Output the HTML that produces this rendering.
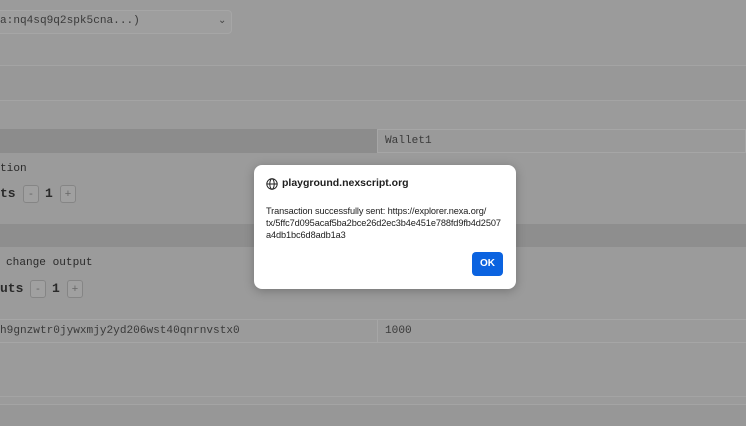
<!DOCTYPE html>
<html><head><style>
*{margin:0;padding:0;box-sizing:border-box}
body{width:746px;height:426px;overflow:hidden;background:#9b9b9b;position:relative;font-family:"Liberation Mono",monospace;color:#2a2a2a}
.a{position:absolute}
.mono{font-family:"Liberation Mono",monospace;font-size:11.1px}
.btn{position:absolute;width:16px;height:18px;border:1px solid #858585;border-radius:3px;background:#a0a0a0;font-size:11px;text-align:center;line-height:16px;color:#666;font-family:"Liberation Sans",sans-serif}
.dlg{position:absolute;left:254px;top:165px;width:262px;height:124px;background:#fff;border-radius:8px;box-shadow:0 2px 10px rgba(0,0,0,.25);font-family:"Liberation Sans",sans-serif;color:#202020}
</style></head><body>
<div class="a" style="left:-5px;top:10px;width:237px;height:24px;border:1px solid #a6a6a6;border-radius:4px;background:#9e9e9e"></div>
<div class="a mono" style="left:0;top:15px;color:#3a3a3a">a:nq4sq9q2spk5cna...)</div>
<div class="a" style="left:218px;top:15px;font-size:10px;color:#444;font-family:'Liberation Sans'">&#8964;</div>
<div class="a" style="left:0;top:65px;width:746px;height:36px;border-top:1px solid #a4a4a4;border-bottom:1px solid #a4a4a4;background:#989898"></div>
<div class="a" style="left:0;top:129px;width:377px;height:24px;background:#8c8c8c"></div>
<div class="a" style="left:377px;top:129px;width:369px;height:24px;border:1px solid #a6a6a6;background:#9a9a9a"></div>
<div class="a mono" style="left:385px;top:135px;color:#3a3a3a">Wallet1</div>
<div class="a mono" style="left:0;top:163px">tion</div>
<div class="a mono" style="left:0;top:186px;font-size:13px;font-weight:bold">ts</div>
<div class="btn" style="left:23px;top:185px">-</div>
<div class="a mono" style="left:45px;top:186px;font-size:13px;font-weight:bold">1</div>
<div class="btn" style="left:60px;top:185px">+</div>
<div class="a" style="left:0;top:224px;width:746px;height:23px;background:#8e8e8e"></div>
<div class="a mono" style="left:6px;top:257px">change output</div>
<div class="a mono" style="left:0;top:281px;font-size:13px;font-weight:bold">uts</div>
<div class="btn" style="left:30px;top:280px">-</div>
<div class="a mono" style="left:52px;top:281px;font-size:13px;font-weight:bold">1</div>
<div class="btn" style="left:67px;top:280px">+</div>
<div class="a" style="left:0;top:319px;width:746px;height:24px;border-top:1px solid #a6a6a6;border-bottom:1px solid #a6a6a6"></div>
<div class="a" style="left:377px;top:319px;width:1px;height:24px;background:#a6a6a6"></div>
<div class="a mono" style="left:0;top:325px;color:#3a3a3a">h9gnzwtr0jywxmjy2yd206wst40qnrnvstx0</div>
<div class="a mono" style="left:385px;top:325px;color:#3a3a3a">1000</div>
<div class="a" style="left:0;top:396px;width:746px;height:9px;border-top:1px solid #a4a4a4;border-bottom:1px solid #a4a4a4"></div>
<div class="a" style="left:0;top:405px;width:746px;height:21px;background:#979797"></div>
<div class="dlg">
<svg class="a" style="left:12px;top:13px" width="12" height="12" viewBox="0 0 12 12" fill="none" stroke="#222" stroke-width="1"><circle cx="6" cy="6" r="5.2"/><ellipse cx="6" cy="6" rx="2.2" ry="5.2"/><line x1="0.8" y1="6" x2="11.2" y2="6"/></svg>
<div class="a" style="left:28px;top:12px;font-size:10.5px;font-weight:bold">playground.nexscript.org</div>
<div class="a" style="left:12px;top:40px;font-size:9.2px;line-height:12px;width:245px;letter-spacing:-0.1px">Transaction successfully sent: https://explorer.nexa.org/<br>tx/5ffc7d095acaf5ba2bce26d2ec3b4e451e788fd9fb4d2507<br>a4db1bc6d8adb1a3</div>
<div class="a" style="left:218px;top:87px;width:31px;height:24px;background:#0b63e0;border-radius:4px;color:#fff;font-size:10px;font-weight:bold;text-align:center;line-height:24px">OK</div>
</div>
</body></html>
